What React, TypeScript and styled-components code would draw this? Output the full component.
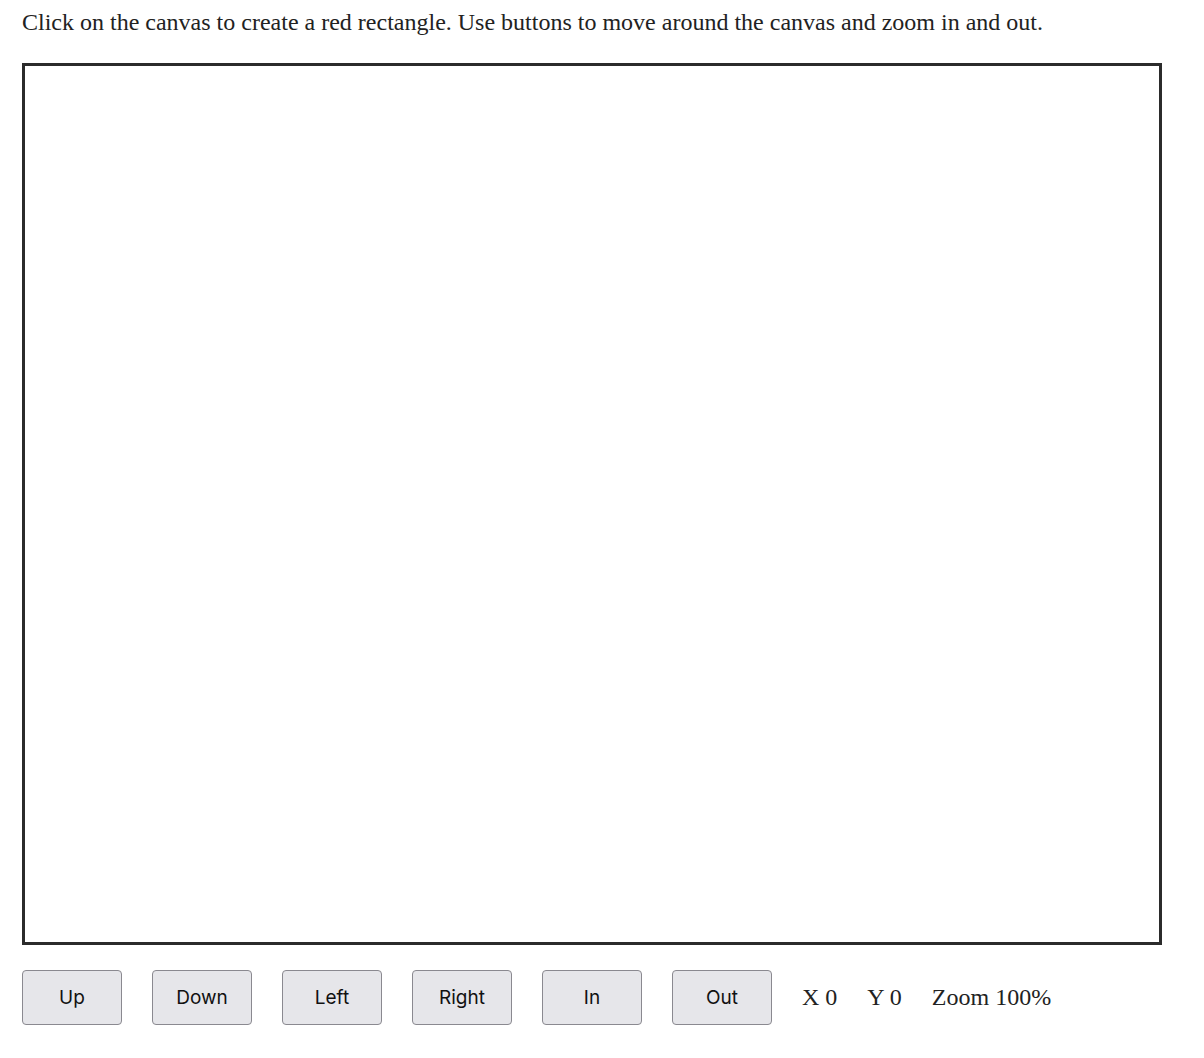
import React, { useState } from "react";
import styled, { createGlobalStyle } from "styled-components";

const Global = createGlobalStyle`
    body {
        margin: 0;
        background: #ffffff;
        color: #222222;
        font-family: "Liberation Serif", "Times New Roman", serif;
    }
`
const Page = styled.div`
    padding: 8px 22px 22px 22px;
`
const Intro = styled.p`
    margin: 0;
    font-size: 24px;
    line-height: 28px;
`
const Board = styled.div`
    margin-top: 27px;
    width: 1140px;
    height: 882px;
    box-sizing: border-box;
    border: 3px solid #2b2b2b;
    background: #ffffff;
    position: relative;
    overflow: hidden;
`
const Rect = styled.div`
    position: absolute;
    width: 40px;
    height: 40px;
    background: red;
`
const Controls = styled.div`
    display: flex;
    align-items: center;
    gap: 30px;
    margin-top: 25px;
`
const Button = styled.button`
    width: 100px;
    height: 55px;
    box-sizing: border-box;
    border: 1px solid #8a8990;
    border-radius: 4px;
    background: #e6e6ea;
    color: #111111;
    font-family: Inter, "Noto Sans", sans-serif;
    font-size: 19px;
    padding: 0;
    cursor: pointer;
`
const Stats = styled.div`
    display: flex;
    gap: 30px;
    font-size: 24px;
    color: #222222;
`

interface Box { x: number; y: number }

const App = () => {
    const [x, setX] = useState<number>(0)
    const [y, setY] = useState<number>(0)
    const [zoom, setZoom] = useState<number>(100)
    const [boxes, setBoxes] = useState<Box[]>([])
    const handleClick = (event: React.MouseEvent<HTMLDivElement>) => {
        const r = event.currentTarget.getBoundingClientRect()
        const s = zoom / 100
        setBoxes([...boxes, { x: (event.clientX - r.left) / s + x, y: (event.clientY - r.top) / s + y }])
    }
    const s = zoom / 100
    return (
        <Page>
            <Global />
            <Intro>Click on the canvas to create a red rectangle. Use buttons to move around the canvas and zoom in and out.</Intro>
            <Board onClick={handleClick}>
                {boxes.map((b, i) => (
                    <Rect key={i} style={{ left: (b.x - x) * s, top: (b.y - y) * s, transform: `scale(${s})`, transformOrigin: "0 0" }} />
                ))}
            </Board>
            <Controls>
                <Button onClick={() => setY(y - 10)}>Up</Button>
                <Button onClick={() => setY(y + 10)}>Down</Button>
                <Button onClick={() => setX(x - 10)}>Left</Button>
                <Button onClick={() => setX(x + 10)}>Right</Button>
                <Button onClick={() => setZoom(zoom + 10)}>In</Button>
                <Button onClick={() => setZoom(Math.max(10, zoom - 10))}>Out</Button>
                <Stats>
                    <span>X {x}</span>
                    <span>Y {y}</span>
                    <span>Zoom {zoom}%</span>
                </Stats>
            </Controls>
        </Page>
    )
};
export default App;
